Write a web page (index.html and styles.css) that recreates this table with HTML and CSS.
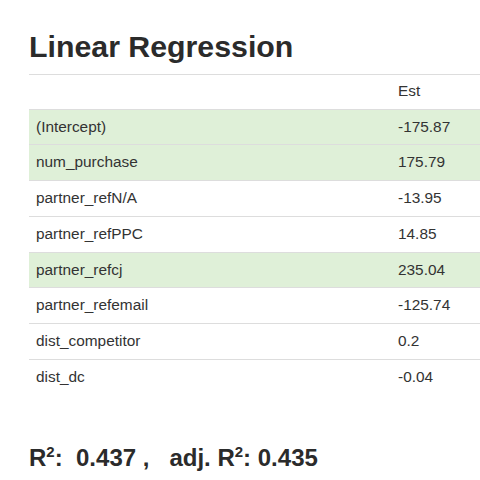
FILE: index.html
```html
<!DOCTYPE html>
<html>
<head>
<meta charset="utf-8">
<link rel="stylesheet" href="styles.css">
</head>
<body>
<div class="page">
  <h1 class="title">Linear Regression</h1>
  <table class="reg">
    <thead>
      <tr><th class="name"></th><th class="val">Est</th></tr>
    </thead>
    <tbody>
      <tr class="success"><td>(Intercept)</td><td>-175.87</td></tr>
      <tr class="success"><td>num_purchase</td><td>175.79</td></tr>
      <tr><td>partner_refN/A</td><td>-13.95</td></tr>
      <tr><td>partner_refPPC</td><td>14.85</td></tr>
      <tr class="success"><td>partner_refcj</td><td>235.04</td></tr>
      <tr><td>partner_refemail</td><td>-125.74</td></tr>
      <tr><td>dist_competitor</td><td>0.2</td></tr>
      <tr class="last"><td>dist_dc</td><td>-0.04</td></tr>
    </tbody>
  </table>
  <p class="fit">R<sup>2</sup>:&nbsp; 0.437 ,&nbsp;&nbsp;&nbsp;adj. R<sup>2</sup>: 0.435</p>
</div>
</body>
</html>
```
FILE: styles.css
```css
html, body {
  margin: 0;
  padding: 0;
  background: #fff;
}
body {
  font-family: "Liberation Sans", Arial, Helvetica, sans-serif;
  color: #333;
  overflow: hidden;
}
.page {
  padding-left: 29px;
  padding-top: 30px;
}
.title {
  margin: 0 0 11px 0;
  font-size: 30.3px;
  line-height: 33px;
  font-weight: bold;
  color: #2b2b2b;
}
.reg {
  border-collapse: collapse;
  width: 451px;
  font-size: 15.4px;
}
.reg th, .reg td {
  padding: 8px 7px 8px 7px;
  line-height: 18.7px;
  text-align: left;
  border-top: 1px solid #ddd;
  color: #333;
}
.reg th {
  font-weight: normal;
  padding-top: 7px;
}
.reg th.name {
  width: 348px;
}
.reg tr.success td {
  background: #dff0d8;
}
.fit {
  margin: 51px 0 0 0;
  font-size: 24px;
  font-weight: bold;
  line-height: 26px;
  color: #2b2b2b;
}
.fit sup {
  font-size: 15px;
  line-height: 0;
  vertical-align: 9px;
}
```
